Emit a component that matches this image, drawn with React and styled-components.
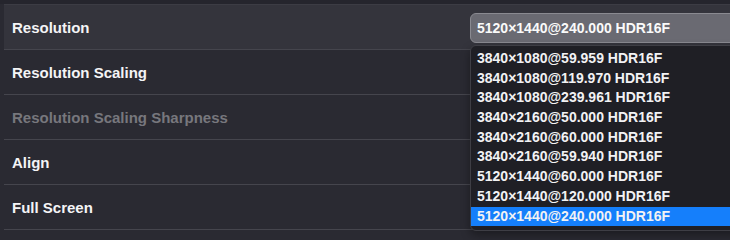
import React from "react";
import styled, { createGlobalStyle } from "styled-components";

const GlobalStyle = createGlobalStyle`
  html, body {
    margin: 0;
    padding: 0;
    background: #2a2a32;
    overflow: hidden;
  }
  body {
    font-family: "Liberation Sans", Arial, sans-serif;
  }
`;

const Page = styled.div`
  position: relative;
  width: 730px;
  height: 240px;
  padding: 4px 0 0 4px;
  box-sizing: border-box;
  background: linear-gradient(#25252d 0 4px, #2a2a32 4px);
`;

const List = styled.div`
  display: flex;
  flex-direction: column;
  border-top: 1px solid #3c3c44;
`;

const Row = styled.div`
  display: flex;
  align-items: center;
  justify-content: space-between;
  height: 44px;
  padding-left: 8px;
  border-bottom: 1px solid #45454d;
  background: ${p => (p.$active ? "#34343c" : "transparent")};
`;

const Label = styled.span`
  font-size: 15px;
  font-weight: 700;
  color: ${p => (p.$disabled ? "#77777d" : "#f4f4f6")};
`;

const SelectBox = styled.div`
  display: flex;
  align-items: center;
  width: 290px;
  height: 30px;
  margin-top: 2px;
  margin-right: -30px;
  padding-left: 6px;
  box-sizing: border-box;
  border: 1px solid #8a8a91;
  border-radius: 6px;
  background: #6a6a72;
  color: #fafafa;
  font-size: 14px;
  font-weight: 700;
`;

const Dropdown = styled.div`
  position: absolute;
  left: 470px;
  top: 45px;
  width: 290px;
  padding: 3px 0 4px;
  box-sizing: border-box;
  border: 1px solid #3e3e45;
  border-radius: 6px;
  background: #1f1f25;
  box-shadow: 0 4px 10px rgba(0, 0, 0, 0.35);
`;

const Option = styled.div`
  height: 19.7px;
  line-height: 19.7px;
  padding-left: 6px;
  font-size: 14px;
  font-weight: 700;
  color: #f2f2f4;
  white-space: nowrap;
  background: ${p => (p.$selected ? "#157ffb" : "transparent")};
`;

const settings = [
  { label: "Resolution", active: true },
  { label: "Resolution Scaling" },
  { label: "Resolution Scaling Sharpness", disabled: true },
  { label: "Align" },
  { label: "Full Screen" },
];

const modes = [
  "3840×1080@59.959 HDR16F",
  "3840×1080@119.970 HDR16F",
  "3840×1080@239.961 HDR16F",
  "3840×2160@50.000 HDR16F",
  "3840×2160@60.000 HDR16F",
  "3840×2160@59.940 HDR16F",
  "5120×1440@60.000 HDR16F",
  "5120×1440@120.000 HDR16F",
  "5120×1440@240.000 HDR16F",
];

const current = "5120×1440@240.000 HDR16F";

export default function App() {
  return (
    <Page>
      <GlobalStyle />
      <List>
        {settings.map(s => (
          <Row key={s.label} $active={s.active}>
            <Label $disabled={s.disabled}>{s.label}</Label>
            {s.active && <SelectBox>{current}</SelectBox>}
          </Row>
        ))}
      </List>
      <Dropdown>
        {modes.map(m => (
          <Option key={m} $selected={m === current}>
            {m}
          </Option>
        ))}
      </Dropdown>
    </Page>
  );
}
